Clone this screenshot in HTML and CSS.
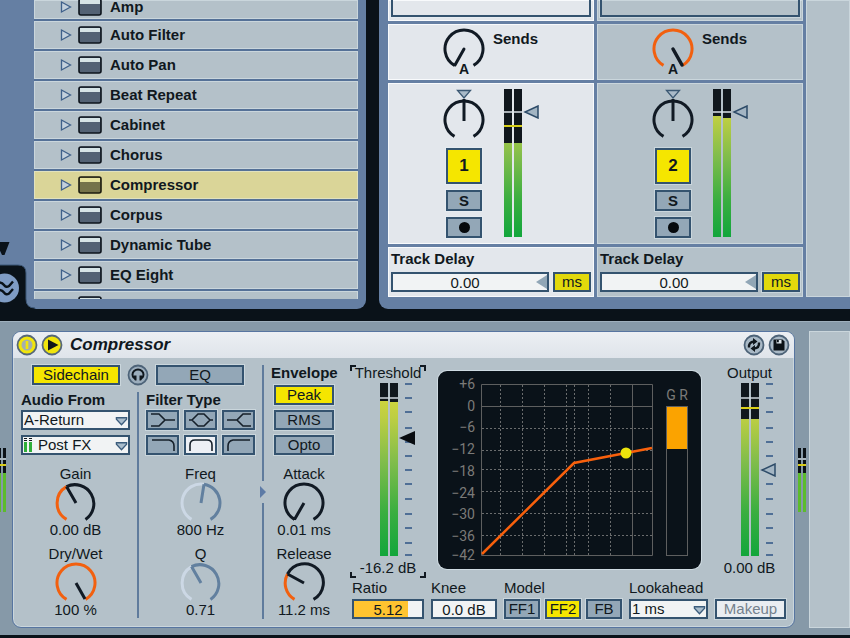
FILE: index.html
```html
<!DOCTYPE html>
<html lang="en">
<head>
    <meta charset="UTF-8">
    <meta name="viewport" content="width=device-width, initial-scale=1.0">
    <title>Compressor</title>
    <link rel="stylesheet" href="styles.css">
</head>
<body>

    <!-- Shared drawings -->
    <svg class="defs" aria-hidden="true">
        <defs>
            <linearGradient id="level" x1="0" y1="0" x2="0" y2="1">
                <stop offset="0" stop-color="#ddd83a"/>
                <stop offset="0.2" stop-color="#bdce42"/>
                <stop offset="0.45" stop-color="#82bd4b"/>
                <stop offset="0.75" stop-color="#3aae40"/>
                <stop offset="1" stop-color="#12a63c"/>
            </linearGradient>
            <symbol id="expand" viewBox="0 0 12 14">
                <path d="M1.5 2 L10.5 7 L1.5 12 Z" fill="#c3d0dc" stroke="#3f608a" stroke-width="1.3"/>
            </symbol>
            <symbol id="device" viewBox="0 0 24 18">
                <rect x="1" y="1" width="22" height="16" rx="2" fill="#536274" stroke="#0d141c" stroke-width="1.6"/>
                <rect x="2" y="2" width="20" height="4" fill="#d6e4e6"/>
            </symbol>
            <symbol id="device-selected" viewBox="0 0 24 18">
                <rect x="1" y="1" width="22" height="16" rx="2" fill="#75734a" stroke="#1c1c10" stroke-width="1.6"/>
                <rect x="2" y="2" width="20" height="4" fill="#e6e29c"/>
            </symbol>
            <symbol id="mini-meter" viewBox="0 0 8 64">
                <path d="M0 0h3v64h-3zM5 0h3v64h-3z" fill="#5cbc2c"/>
                <path d="M0 0h3v25h-3zM5 0h3v25h-3z" fill="#0b1116"/>
                <path d="M0 11h8" stroke="#a9b6bf" stroke-width="2"/>
                <path d="M0 17h8" stroke="#d8cc1c" stroke-width="2"/>
            </symbol>
            <symbol id="ticks" viewBox="0 0 16 173">
                <path d="M6 1h7M6 15h7M6 29h7M6 45h7M6 59h7M6 73h7M6 87h7M6 101h7M6 116h7M6 131h7M6 145h7M6 160h7M6 172h7" stroke="#4f6f96" stroke-width="2"/>
            </symbol>
            <symbol id="drop" viewBox="0 0 14 10">
                <path d="M1.5 1.5 H12.5 V3 L7 9 L1.5 3 Z" fill="#a9bccb" stroke="#3b5c7c" stroke-width="1.4"/>
            </symbol>
        </defs>
    </svg>

    <main class="workspace">

        <section class="browser">
            <ul class="device-list">
                <li><svg class="expand"><use href="#expand"/></svg><svg class="device-icon"><use href="#device"/></svg>Amp</li>
                <li><svg class="expand"><use href="#expand"/></svg><svg class="device-icon"><use href="#device"/></svg>Auto Filter</li>
                <li><svg class="expand"><use href="#expand"/></svg><svg class="device-icon"><use href="#device"/></svg>Auto Pan</li>
                <li><svg class="expand"><use href="#expand"/></svg><svg class="device-icon"><use href="#device"/></svg>Beat Repeat</li>
                <li><svg class="expand"><use href="#expand"/></svg><svg class="device-icon"><use href="#device"/></svg>Cabinet</li>
                <li><svg class="expand"><use href="#expand"/></svg><svg class="device-icon"><use href="#device"/></svg>Chorus</li>
                <li class="selected"><svg class="expand"><use href="#expand"/></svg><svg class="device-icon"><use href="#device-selected"/></svg>Compressor</li>
                <li><svg class="expand"><use href="#expand"/></svg><svg class="device-icon"><use href="#device"/></svg>Corpus</li>
                <li><svg class="expand"><use href="#expand"/></svg><svg class="device-icon"><use href="#device"/></svg>Dynamic Tube</li>
                <li><svg class="expand"><use href="#expand"/></svg><svg class="device-icon"><use href="#device"/></svg>EQ Eight</li>
                <li><svg class="device-icon lone"><use href="#device"/></svg></li>
            </ul>
            <svg class="browser-corner" viewBox="0 0 36 70" aria-hidden="true">
                <path d="M-8 3 H9.5 L4.5 16 H2 L-4 3 Z" fill="#0a1219"/>
                <path d="M-2 26 H18 Q26 26 26 34 V60 Q26 69 35 69 V72 H-2 Z" fill="#0a1219" stroke="#3d5878"/>
                <circle cx="4.5" cy="49" r="14.5" fill="#7f9cc4"/>
                <path d="M-2 43.5 Q2 43 4 46 Q6 49 9 47 L13 42.5 M-2 51 Q2 50.5 4 53.5 Q6 56.5 9 54.5 L13 50" fill="none" stroke="#0a1219" stroke-width="2.4"/>
            </svg>
        </section>

        <section class="mixer">
            <div class="track active">
                <div class="slot"><div class="slot-box"></div></div>
                <div class="sends">
                    <svg class="send-knob" viewBox="0 0 42 48" role="img" aria-label="Send A">
                        <path d="M11.5 37.4 A19 19 0 1 1 30.5 37.4" fill="none" stroke="#111a24" stroke-width="3"/>
                        <path d="M21 21 L12 37" stroke="#111a24" stroke-width="3" stroke-linecap="round"/>
                        <text x="21" y="46" text-anchor="middle">A</text>
                    </svg>
                    <h3>Sends</h3>
                </div>
                <div class="strip">
                    <div class="strip-controls">
                        <svg class="pan-knob" viewBox="0 0 42 50" role="img" aria-label="Pan">
                            <path d="M11.5 47.4 A19 19 0 1 1 30.5 47.4" fill="none" stroke="#111a24" stroke-width="3"/>
                            <path d="M21 32 V10" stroke="#111a24" stroke-width="3"/>
                            <path d="M14.5 1.5 H27.5 L21 9 Z" fill="#a9bac8" stroke="#3b5873" stroke-width="1.3"/>
                        </svg>
                        <button class="activator">1</button>
                        <button class="small-btn solo">S</button>
                        <button class="small-btn" aria-label="Arm"><span class="arm-dot"></span></button>
                    </div>
                    <div class="fader">
                        <svg class="meter track-meter" viewBox="0 0 18 148" aria-hidden="true">
                            <path d="M0 0h8v148h-8zM10 0h8v148h-8z" fill="url(#level)"/>
                            <path d="M0 0h8v54h-8zM10 0h8v54h-8z" fill="#10171d"/>
                            <path d="M0 23h18" stroke="#dce4ea" stroke-width="1.5"/>
                            <path d="M0 37h18" stroke="#d8cf1a" stroke-width="2"/>
                        </svg>
                        <input class="track-volume" type="range" min="0" max="100" step="any" value="88" aria-label="Track 1 volume">
                    </div>
                </div>
                <div class="delay">
                    <label for="delay-1">Track Delay</label>
                    <div class="delay-row">
                        <input class="field delay-field" id="delay-1" type="text" value="0.00">
                        <button class="btn on unit">ms</button>
                    </div>
                </div>
            </div>

            <div class="track">
                <div class="slot"><div class="slot-box"></div></div>
                <div class="sends">
                    <svg class="send-knob" viewBox="0 0 42 48" role="img" aria-label="Send A">
                        <path d="M11.5 37.4 A19 19 0 1 1 30.5 37.4" fill="none" stroke="#f2600f" stroke-width="3"/>
                        <path d="M21 21 L30 37" stroke="#111a24" stroke-width="3.5" stroke-linecap="round"/>
                        <text x="21" y="46" text-anchor="middle">A</text>
                    </svg>
                    <h3>Sends</h3>
                </div>
                <div class="strip">
                    <div class="strip-controls">
                        <svg class="pan-knob" viewBox="0 0 42 50" role="img" aria-label="Pan">
                            <path d="M11.5 47.4 A19 19 0 1 1 30.5 47.4" fill="none" stroke="#111a24" stroke-width="3"/>
                            <path d="M21 32 V10" stroke="#111a24" stroke-width="3"/>
                            <path d="M14.5 1.5 H27.5 L21 9 Z" fill="#a9bac8" stroke="#3b5873" stroke-width="1.3"/>
                        </svg>
                        <button class="activator">2</button>
                        <button class="small-btn solo">S</button>
                        <button class="small-btn" aria-label="Arm"><span class="arm-dot"></span></button>
                    </div>
                    <div class="fader">
                        <svg class="meter track-meter" viewBox="0 0 18 148" aria-hidden="true">
                            <path d="M0 0h8v148h-8zM10 0h8v148h-8z" fill="url(#level)"/>
                            <path d="M0 0h8v27h-8zM10 0h8v29h-8z" fill="#10171d"/>
                            <path d="M0 23h18" stroke="#dce4ea" stroke-width="1.5"/>
                        </svg>
                        <input class="track-volume" type="range" min="0" max="100" step="any" value="88" aria-label="Track 2 volume">
                    </div>
                </div>
                <div class="delay">
                    <label for="delay-2">Track Delay</label>
                    <div class="delay-row">
                        <input class="field delay-field" id="delay-2" type="text" value="0.00">
                        <button class="btn on unit">ms</button>
                    </div>
                </div>
            </div>

            <div class="track-area"></div>
        </section>
    </main>

    <section class="rack">
        <div class="rack-gutter first"><svg class="mini-meter"><use href="#mini-meter"/></svg></div>

        <article class="plugin">
            <header class="plugin-head">
                <button class="round" aria-label="Device on">
                    <svg viewBox="0 0 22 22"><circle cx="11" cy="11" r="9.5" fill="#f1e50c" stroke="#566879" stroke-width="1.8"/><circle cx="11" cy="11" r="5.5" fill="#a4b0ae"/><path d="M11 7v8" stroke="#f1e50c" stroke-width="2.6"/></svg>
                </button>
                <button class="round" aria-label="Preview">
                    <svg viewBox="0 0 22 22"><circle cx="11" cy="11" r="9.5" fill="#f1e50c" stroke="#566879" stroke-width="1.8"/><path d="M7 5.5 L17.5 11 L7 16.5 Z" fill="#10151a"/></svg>
                </button>
                <h2>Compressor</h2>
                <button class="round" aria-label="Hot swap">
                    <svg viewBox="0 0 22 22"><circle cx="11" cy="11" r="9.5" fill="#a9b9c6" stroke="#4d6378" stroke-width="1.8"/><path d="M6 13.5 Q5.5 8 11 7.5 M16 8.5 Q16.5 14 11 14.5" fill="none" stroke="#10171d" stroke-width="2.4"/><path d="M10 4 L14.5 7.5 L10 11 Z M12 18 L7.5 14.5 L12 11 Z" fill="#10171d"/></svg>
                </button>
                <button class="round" aria-label="Save preset">
                    <svg viewBox="0 0 22 22"><circle cx="11" cy="11" r="9.5" fill="#a9b9c6" stroke="#4d6378" stroke-width="1.8"/><path d="M5.5 5.5 H14.5 L16.5 7.5 V16.5 H5.5 Z" fill="#0b1116"/><path d="M8.5 6 h5 v3.5 h-5 z" fill="#dde5ea"/><path d="M9 6 h1.8 v2.2 h-1.8 z" fill="#0b1116"/></svg>
                </button>
            </header>

            <div class="plugin-body">
                <div class="sidechain">
                    <div class="sidechain-head">
                        <button class="btn on wide">Sidechain</button>
                        <button class="round" aria-label="Listen">
                            <svg viewBox="0 0 22 22"><circle cx="11" cy="11" r="9.5" fill="#9badbc" stroke="#4d6378" stroke-width="1.8"/><path d="M7 14 Q5.5 12.5 5.5 10.5 A5.5 5 0 0 1 16.5 10.5 Q16.5 12.5 15 14" fill="none" stroke="#10171d" stroke-width="2"/><path d="M7 11.5 h2.5 v5 h-1.5 l-1.5 -2 z M15 11.5 h-2.5 v5 h1.5 l1.5 -2 z" fill="#10171d"/></svg>
                        </button>
                        <button class="btn wide">EQ</button>
                    </div>

                    <div class="sidechain-cols">
                        <div class="column">
                            <label class="heading" for="audio-from">Audio From</label>
                            <div class="stack">
                                <div class="picker">
                                    <select class="field" id="audio-from"><option>A-Return</option></select>
                                    <svg class="drop"><use href="#drop"/></svg>
                                </div>
                                <div class="picker with-level">
                                    <select class="field" aria-label="Tap point"><option>Post FX</option></select>
                                    <svg class="tap-level" viewBox="0 0 9 14"><path d="M0 4h3v10h-3zM5 4h3v10h-3z" fill="#2fae3a"/><path d="M0 0h3v1h-3zM5 0h3v1h-3zM0 2h3v1h-3zM5 2h3v1h-3z" fill="#10171d"/></svg>
                                    <svg class="drop"><use href="#drop"/></svg>
                                </div>
                            </div>
                            <div class="knobs">
                                <div class="knob">
                                    <span>Gain</span>
                                    <svg viewBox="0 0 42 40" role="img" aria-label="Gain knob"><path d="M11.5 37.4 A19 19 0 0 1 11.5 4.6" class="amount"/><path d="M11.5 4.6 A19 19 0 0 1 30.5 37.4 M11.5 4.6 L21 21" class="dial"/></svg>
                                    <output>0.00 dB</output>
                                </div>
                                <div class="knob">
                                    <span>Dry/Wet</span>
                                    <svg viewBox="0 0 42 40" role="img" aria-label="Dry/Wet knob"><path d="M11.5 37.4 A19 19 0 1 1 30.5 37.4" class="amount"/><path d="M21 21 L30 37" class="dial"/></svg>
                                    <output>100 %</output>
                                </div>
                            </div>
                        </div>

                        <div class="rule"></div>

                        <div class="column disabled">
                            <h3 class="heading">Filter Type</h3>
                            <div class="filters">
                                <button class="btn" aria-label="Low shelf"><svg viewBox="0 0 28 16"><path d="M2 2h8l6 6-6 6H2M16 8h10"/></svg></button>
                                <button class="btn" aria-label="Bell"><svg viewBox="0 0 28 16"><path d="M2 8h3l6-6h6l6 6h3M5 8l6 6h6l6-6"/></svg></button>
                                <button class="btn" aria-label="High shelf"><svg viewBox="0 0 28 16"><path d="M26 2h-8l-6 6 6 6h8M12 8H2"/></svg></button>
                                <button class="btn" aria-label="Low pass"><svg viewBox="0 0 28 16"><path d="M3 3h17q5 1 5 6v5"/></svg></button>
                                <button class="btn picked" aria-label="Band pass"><svg viewBox="0 0 28 16"><path d="M3 14V8q0-5 5-5h12q5 0 5 5v6"/></svg></button>
                                <button class="btn" aria-label="High pass"><svg viewBox="0 0 28 16"><path d="M25 3H8q-5 1-5 6v5"/></svg></button>
                            </div>
                            <div class="knobs">
                                <div class="knob">
                                    <span>Freq</span>
                                    <svg viewBox="0 0 42 40" role="img" aria-label="Freq knob"><path d="M11.5 37.4 A19 19 0 0 1 24 2.2" class="amount"/><path d="M24 2.2 A19 19 0 0 1 30.5 37.4 M24 2.2 L21 21" class="dial"/></svg>
                                    <output>800 Hz</output>
                                </div>
                                <div class="knob">
                                    <span>Q</span>
                                    <svg viewBox="0 0 42 40" role="img" aria-label="Q knob"><path d="M11.5 37.4 A19 19 0 0 1 11.5 4.6" class="amount"/><path d="M11.5 4.6 A19 19 0 0 1 30.5 37.4 M11.5 4.6 L21 21" class="dial"/></svg>
                                    <output>0.71</output>
                                </div>
                            </div>
                        </div>
                    </div>
                </div>

                <div class="split">
                    <div class="rule"></div>
                    <svg viewBox="0 0 8 14" aria-hidden="true"><path d="M1 1 L7 7 L1 13 Z" fill="#5d7ba6"/></svg>
                    <div class="rule"></div>
                </div>

                <div class="envelope">
                    <h3 class="heading">Envelope</h3>
                    <div class="stack">
                        <button class="btn on">Peak</button>
                        <button class="btn">RMS</button>
                        <button class="btn">Opto</button>
                    </div>
                    <div class="knobs">
                        <div class="knob">
                            <span>Attack</span>
                            <svg viewBox="0 0 42 40" role="img" aria-label="Attack knob"><path d="M11.5 37.4 A19 19 0 1 1 30.5 37.4 M11.5 37.4 L21 21" class="dial"/></svg>
                            <output>0.01 ms</output>
                        </div>
                        <div class="knob">
                            <span>Release</span>
                            <svg viewBox="0 0 42 40" role="img" aria-label="Release knob"><path d="M11.5 37.4 A19 19 0 0 1 4.5 12" class="amount"/><path d="M4.5 12 A19 19 0 1 1 30.5 37.4 M4.5 12 L21 21" class="dial"/></svg>
                            <output>11.2 ms</output>
                        </div>
                    </div>
                </div>

                <div class="dynamics">
                    <div class="dynamics-top">
                        <div class="level-col threshold">
                            <label for="threshold">Threshold</label>
                            <div class="fader">
                                <svg class="meter" viewBox="0 0 18 173" aria-hidden="true">
                                    <path d="M0 0h8v173h-8zM10 0h8v173h-8z" fill="url(#level)"/>
                                    <path d="M0 0h8v18h-8zM10 0h8v19h-8z" fill="#10171d"/>
                                    <path d="M0 15h18" stroke="#ccd6dc" stroke-width="1.5"/>
                                </svg>
                                <div class="slide">
                                    <svg><use href="#ticks"/></svg>
                                    <input class="solid" id="threshold" type="range" min="0" max="100" step="any" value="70">
                                </div>
                            </div>
                            <output>-16.2 dB</output>
                        </div>

                        <div class="graph">
                            <svg viewBox="0 0 263 198" role="img" aria-label="Transfer curve">
                                <g class="grid-solid">
                                    <path d="M43.5 13.5 H214.5 V184.5 H43.5 Z M43.5 35.5 H214.5 M194.5 13.5 V184.5"/>
                                    <rect x="228.5" y="35.5" width="21" height="149"/>
                                </g>
                                <path class="grid-dots" d="M44 57.5H214M44 79.5H214M44 98.5H214M44 120.5H214M44 142.5H214M44 164.5H214M62.5 14V184M84.5 14V184M106.5 14V184M128.5 14V184M136.5 14V184M150.5 14V184M172.5 14V184"/>
                                <g class="scale">
                                    <text x="37" y="18">+6</text>
                                    <text x="37" y="40">0</text>
                                    <text x="37" y="61">−6</text>
                                    <text x="37" y="83">−12</text>
                                    <text x="37" y="105">−18</text>
                                    <text x="37" y="127">−24</text>
                                    <text x="37" y="148">−30</text>
                                    <text x="37" y="170">−36</text>
                                    <text x="37" y="189">−42</text>
                                    <text x="250" y="29">G R</text>
                                </g>
                                <rect x="229" y="36" width="20" height="42" fill="#fba300"/>
                                <path d="M44 183 L136 92 L214 77" fill="none" stroke="#f8600c" stroke-width="2.5"/>
                                <circle cx="188" cy="82" r="5.5" fill="#ece40c"/>
                            </svg>
                        </div>

                        <div class="level-col makeup-level">
                            <label for="output">Output</label>
                            <div class="fader">
                                <svg class="meter" viewBox="0 0 18 173" aria-hidden="true">
                                    <path d="M0 0h8v173h-8zM10 0h8v173h-8z" fill="url(#level)"/>
                                    <path d="M0 0h8v36h-8zM10 0h8v36h-8z" fill="#10171d"/>
                                    <path d="M0 15h18" stroke="#ccd6dc" stroke-width="1.5"/>
                                    <path d="M0 25h18" stroke="#d8cf1a" stroke-width="2"/>
                                </svg>
                                <div class="slide">
                                    <svg><use href="#ticks"/></svg>
                                    <input id="output" type="range" min="0" max="100" step="any" value="50">
                                </div>
                            </div>
                            <output>0.00 dB</output>
                        </div>
                    </div>

                    <div class="dynamics-bottom">
                        <div class="param ratio">
                            <label for="ratio">Ratio</label>
                            <input class="field" id="ratio" type="text" value="5.12">
                        </div>
                        <div class="param knee">
                            <label for="knee">Knee</label>
                            <input class="field" id="knee" type="text" value="0.0 dB">
                        </div>
                        <div class="param">
                            <span>Model</span>
                            <div class="models">
                                <button class="btn">FF1</button>
                                <button class="btn on">FF2</button>
                                <button class="btn">FB</button>
                            </div>
                        </div>
                        <div class="param lookahead">
                            <label for="lookahead">Lookahead</label>
                            <div class="picker">
                                <select class="field" id="lookahead"><option>1 ms</option></select>
                                <svg class="drop"><use href="#drop"/></svg>
                            </div>
                        </div>
                        <button class="btn makeup">Makeup</button>
                    </div>
                </div>
            </div>
        </article>

        <div class="rack-gutter"><svg class="mini-meter"><use href="#mini-meter"/></svg></div>
        <div class="rack-rest"></div>
    </section>

</body>
</html>
```

FILE: styles.css
```css
:root {
    --dark: #0a1219;
    --frame: #657fa3;
    --panel: #b4c1c9;
    --panel-light: #e3e7ec;
    --button: #93a7b7;
    --line: #34536f;
    --yellow: #f5e600;
    --orange: #f2600f;
    --text: #101820;
    --halo: rgba(235, 245, 250, 0.4);
}

* { margin: 0; padding: 0; box-sizing: border-box; }

body {
    min-height: 100vh;
    background: var(--dark);
    color: var(--text);
    font: 15px/16px "Liberation Sans", Arial, sans-serif;
    overflow-x: hidden;
}

h2, h3 { font-size: 15px; line-height: 16px; }
svg { display: block; }
.defs { position: absolute; width: 0; height: 0; }
button, input, select { font: inherit; color: inherit; }
button { cursor: pointer; }

/* --- Top half --- */
.workspace { display: flex; gap: 13px; padding-bottom: 12px; }

.browser {
    position: relative;
    width: 366px;
    flex-shrink: 0;
    padding: 0 8px 10px 34px;
    background: var(--frame);
    border-radius: 0 0 9px 0;
}
.device-list {
    list-style: none;
    height: 299px;
    overflow: hidden;
    background: var(--panel);
}
.device-list li {
    display: flex;
    align-items: center;
    height: 30px;
    padding-left: 26px;
    border-bottom: 2px solid #557197;
    box-shadow: inset 0 0 0 1px var(--halo);
    font-weight: bold;
}
.device-list li:first-child { height: 21px; padding-bottom: 5px; }
.device-list .selected { background: #dad598; }
.expand { width: 12px; height: 14px; margin-right: 6px; }
.device-icon { width: 24px; height: 18px; margin-right: 8px; }
.lone { margin-left: 18px; }
.browser-corner { position: absolute; left: 0; bottom: 0; width: 36px; height: 70px; }

.mixer {
    flex: 1;
    display: flex;
    gap: 3px;
    min-width: 0;
    padding: 0 0 12px 9px;
    background: var(--frame);
    border-bottom-left-radius: 9px;
}
.track {
    width: 206px;
    flex-shrink: 0;
    display: flex;
    flex-direction: column;
    gap: 3px;
}
.track > div, .track-area { background: var(--panel); box-shadow: inset 0 0 0 1px var(--halo); }
.track.active > div { background: var(--panel-light); box-shadow: inset 0 0 0 1px #f8fafc; }
.track-area { flex: 1; }

.slot { padding: 0 3px 4px; }
.slot-box { height: 17px; border: 2px solid var(--line); border-top: 0; box-shadow: 0 0 0 1px var(--halo); }
.sends { display: flex; gap: 8px; height: 56px; padding: 4px 0 0 55px; }
.sends h3 { padding-top: 3px; }
.send-knob { width: 42px; height: 48px; }
.send-knob text { font-weight: bold; font-size: 14px; fill: var(--text); }

.strip { display: flex; gap: 19px; height: 161px; padding: 6px 0 0 55px; }
.strip-controls { display: flex; flex-direction: column; align-items: center; gap: 6px; }
.pan-knob { width: 42px; height: 50px; }
.activator, .small-btn {
    width: 36px;
    border: 2px solid var(--line);
    box-shadow: 0 0 0 1px var(--halo);
}
.activator { height: 36px; margin-top: 3px; background: var(--yellow); font-size: 17px; font-weight: bold; }
.small-btn { display: grid; place-items: center; height: 21px; background: var(--button); }
.solo { font-weight: bold; }
.arm-dot { width: 11px; height: 11px; border-radius: 50%; background: #06090c; }

.delay { padding: 4px 3px 5px; }
.delay label { display: block; margin-bottom: 5px; font-weight: bold; }
.delay-row { display: flex; gap: 4px; }
.delay-field {
    flex: 1;
    min-width: 0;
    padding-right: 10px;
    background: #f1f3f4 url("data:image/svg+xml,%3Csvg xmlns='http://www.w3.org/2000/svg' width='11' height='14'%3E%3Cpath d='M11 0V14L0 7Z' fill='%2391a6b6'/%3E%3C/svg%3E") no-repeat right center;
}
.unit { width: 38px; }

/* --- Shared controls --- */
.btn {
    height: 20px;
    border: 2px solid var(--line);
    background: var(--button);
    box-shadow: 0 0 0 1px var(--halo);
    line-height: 16px;
    white-space: nowrap;
}
.btn.on { background: var(--yellow); }
.btn.picked { background: #edf0f5; }
.unit.btn.on { background: #e2d90c; }
.field {
    height: 20px;
    border: 2px solid var(--line);
    border-radius: 0;
    background-color: #f1f3f4;
    text-align: center;
}
.round { width: 22px; height: 22px; border: 0; border-radius: 50%; background: none; }

.picker { position: relative; }
.picker select { appearance: none; display: block; width: 100%; padding-left: 1px; text-align: left; line-height: 16px; }
.with-level select { padding-left: 15px; }
.drop { position: absolute; right: 2px; top: 6px; width: 13px; height: 10px; pointer-events: none; }
.tap-level { position: absolute; left: 3px; top: 3px; width: 9px; height: 14px; pointer-events: none; }

.fader { display: flex; gap: 1px; }
.meter { width: 18px; height: 173px; }
.track-meter { height: 148px; }
input[type="range"] {
    appearance: none;
    writing-mode: vertical-lr;
    direction: rtl;
    width: 16px;
    height: 173px;
    background: none;
}
input.track-volume { height: 148px; }
input[type="range"]::-webkit-slider-thumb {
    appearance: none;
    width: 16px;
    height: 14px;
    background: url("data:image/svg+xml,%3Csvg xmlns='http://www.w3.org/2000/svg' width='16' height='14'%3E%3Cpath d='M15 1V13L2 7Z' fill='%23a3b5c3' stroke='%232d4b68' stroke-width='1.5'/%3E%3C/svg%3E") no-repeat;
}
input.solid::-webkit-slider-thumb {
    background: url("data:image/svg+xml,%3Csvg xmlns='http://www.w3.org/2000/svg' width='16' height='14'%3E%3Cpath d='M16 0V14L0 7Z' fill='%23080c10'/%3E%3C/svg%3E") no-repeat;
}
.slide { display: grid; }
.slide > * { grid-area: 1 / 1; width: 16px; height: 173px; }

/* --- Device rack --- */
.rack {
    display: flex;
    padding: 9px 0 7px;
    background: #8699a8;
    border-top: 1px solid #9eafbc;
}
.rack-gutter { display: flex; align-items: center; justify-content: center; width: 14px; }
.rack-gutter.first { width: 12px; justify-content: flex-start; overflow: hidden; }
.first .mini-meter { margin-left: -2px; }
.mini-meter { width: 8px; height: 64px; flex-shrink: 0; }
.rack-rest { width: 41px; background: var(--panel); box-shadow: inset 0 0 0 1px var(--halo); }

.plugin {
    flex: 1;
    min-width: 0;
    background: var(--panel);
    border: 1px solid #5775a0;
    border-radius: 9px;
    box-shadow: inset 0 0 0 1px var(--halo);
    overflow: hidden;
}
.plugin-head {
    display: flex;
    align-items: center;
    gap: 3px;
    height: 26px;
    padding: 0 4px 0 3px;
    background: linear-gradient(#eceff3, #dfe4ea);
}
.plugin-head h2 { flex: 1; padding-left: 4px; font-size: 17px; font-style: italic; }

.plugin-body { display: flex; padding: 7px 8px 8px; }
.rule { width: 2px; background: #5f7b9c; }
.heading { display: block; font-weight: bold; white-space: nowrap; }
.stack { display: flex; flex-direction: column; gap: 5px; }

.sidechain { width: 234px; }
.sidechain-head { display: flex; align-items: center; justify-content: center; gap: 7px; height: 20px; margin-bottom: 7px; }
.wide { width: 88px; }
.sidechain-cols { display: flex; justify-content: space-between; }
.column { width: 109px; }
.column .heading { margin-bottom: 2px; }
.filters { display: grid; grid-template-columns: repeat(3, 1fr); gap: 5px; }
.filters svg { width: 28px; height: 16px; margin: 0 auto; }
.filters path { fill: none; stroke: #16202a; stroke-width: 1.6; }

.knobs { display: flex; flex-direction: column; gap: 8px; padding-top: 11px; }
.knob { display: flex; flex-direction: column; align-items: center; white-space: nowrap; }
.knob svg { width: 42px; height: 40px; }
.amount, .dial { fill: none; stroke-width: 3; }
.amount { stroke: var(--orange); }
.dial { stroke: #111a24; stroke-linejoin: round; }
.disabled .amount { stroke: #ccd8e5; }
.disabled .dial { stroke: #62809f; }

.split { display: flex; flex-direction: column; align-items: center; gap: 4px; width: 16px; }
.split .rule { flex: 1; }
.split svg { width: 8px; height: 14px; }

.envelope { width: 66px; }
.envelope .heading { margin-bottom: 4px; }
.envelope .stack { padding: 0 3px; }

.dynamics { flex: 1; min-width: 0; margin-left: 13px; }
.dynamics-top { display: flex; gap: 12px; }
.level-col { display: flex; flex-direction: column; align-items: center; white-space: nowrap; }
.level-col label { margin-bottom: 2px; }
.level-col output { margin-top: 4px; }
.threshold {
    width: 76px;
    padding-bottom: 2px;
    background:
        linear-gradient(var(--text), var(--text)) 0 0 / 6px 2px,
        linear-gradient(var(--text), var(--text)) 0 0 / 2px 6px,
        linear-gradient(var(--text), var(--text)) 100% 0 / 6px 2px,
        linear-gradient(var(--text), var(--text)) 100% 0 / 2px 6px,
        linear-gradient(var(--text), var(--text)) 0 100% / 6px 2px,
        linear-gradient(var(--text), var(--text)) 0 100% / 2px 6px,
        linear-gradient(var(--text), var(--text)) 100% 100% / 6px 2px,
        linear-gradient(var(--text), var(--text)) 100% 100% / 2px 6px;
    background-repeat: no-repeat;
}
.level-col .fader { padding-left: 18px; }
.makeup-level { width: 73px; }

.graph {
    flex: 1;
    min-width: 0;
    margin: 6px 0 9px;
    background: var(--dark);
    border-radius: 9px;
    box-shadow: 0 0 0 1px #cfdbe2;
}
.graph svg { width: 100%; height: 198px; }
.grid-solid { fill: none; stroke: #5e5f5f; }
.grid-dots { fill: none; stroke: #6a6c6d; stroke-dasharray: 2 2; }
.scale { font-family: Roboto, sans-serif; font-size: 14px; fill: #7b7a78; text-anchor: end; }

.dynamics-bottom { display: flex; align-items: flex-end; justify-content: space-between; padding: 2px 0 0 2px; }
.param { display: flex; flex-direction: column; gap: 3px; }
.ratio { width: 72px; }
.ratio .field { background: linear-gradient(to right, #ffc430 80%, #f1f3f4 80%); }
.knee { width: 66px; }
.param .field { width: 100%; }
.models { display: flex; gap: 5px; }
.models .btn { width: 36px; }
.lookahead { width: 79px; }
.makeup { width: 71px; background: #e9edf1; color: #74818d; }
```
